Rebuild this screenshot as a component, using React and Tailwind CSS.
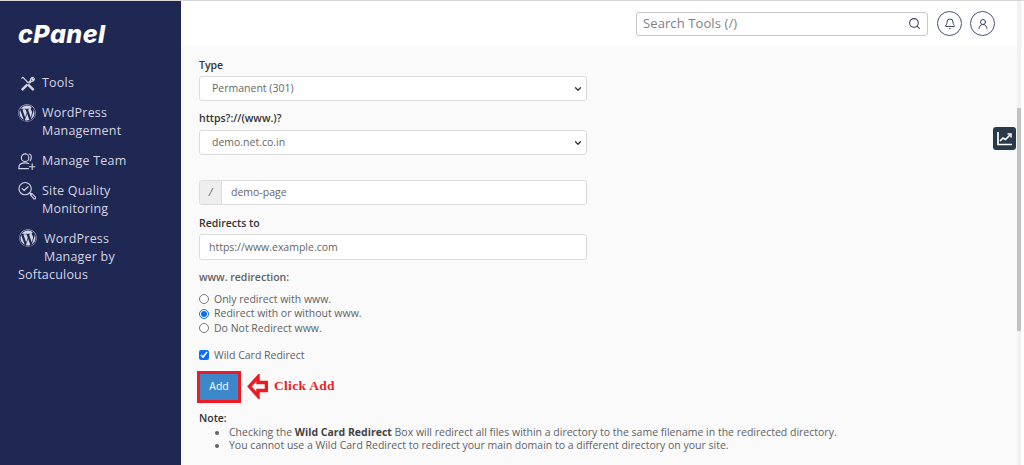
import { Bell, ChevronDown, Search, UserRound } from 'lucide-react'
import { FaWordpress } from 'react-icons/fa'

function ToolsIcon() {
  return (
    <svg width="15" height="15" viewBox="0 0 17 17" fill="none" stroke="currentColor" strokeWidth="1.4" strokeLinecap="round" strokeLinejoin="round">
      <path d="M2 2.500 3.500 1.500 9 7.500" />
      <path d="M7.500 9.500 2 15l1 1 5.500-5.500" />
      <path d="M9.500 7.500 12 5c-.5-1.800.8-3.500 3-3.500l-1.500 1.800 1 1 1.800-1.200c0 2-1.800 3.400-3.500 2.900L11 8" />
      <path d="M10 9.500 15.500 15 14.500 16 9 10.500" />
    </svg>
  )
}

function TeamIcon() {
  return (
    <svg width="19" height="19" viewBox="0 0 19 19" fill="none" stroke="currentColor" strokeWidth="1.2" strokeLinecap="round">
      <circle cx="7.500" cy="5.500" r="4" />
      <path d="M12 1.600c2.400.6 2.900 4.600.8 7" />
      <path d="M1 17v-1.500C1 12.500 3.500 11 7.500 11c1.500 0 2.800.2 3.800.7" />
      <path d="M1 17h10" />
      <path d="M15 12v6M12 15h6" />
    </svg>
  )
}

function QualityIcon() {
  return (
    <svg width="19" height="20" viewBox="0 0 19 20" fill="none" stroke="currentColor" strokeWidth="1.2" strokeLinecap="round" strokeLinejoin="round">
      <circle cx="7.500" cy="7.500" r="6.500" />
      <path d="m4.500 7.500 2 2 4-4" />
      <path d="m12.500 12 1.500 1.500" />
      <path d="m13 14 1.500-1.500 3.700 3.700c.6.6.6 1.300.1 1.800s-1.200.5-1.800-.1z" />
    </svg>
  )
}

function SideItem({ icon, children }) {
  return (
    <div className="flex gap-[6px] mb-[12px]">
      <span className="w-[18px] h-[18px] shrink-0 flex items-center justify-center">{icon}</span>
      <span className="leading-[18px]">{children}</span>
    </div>
  )
}

function Sidebar() {
  return (
    <aside className="w-[181px] shrink-0 bg-[#1f2753] text-[#d3d6e4] text-[12.500px] tracking-[0.2px] pl-[18px] pr-2">
      <div className="h-[47px] pt-[20px] text-white text-[25px] leading-[26px] font-extrabold italic font-['Inter',sans-serif] tracking-[0.5px]">
        cPanel
      </div>
      <div className="pt-[26px]">
        <SideItem icon={<ToolsIcon />}>Tools</SideItem>
        <SideItem icon={<FaWordpress size={18} />}>WordPress<br />Management</SideItem>
        <SideItem icon={<TeamIcon />}>Manage Team</SideItem>
        <SideItem icon={<QualityIcon />}>Site Quality<br />Monitoring</SideItem>
        <div className="leading-[18px] mt-[-1px]">
          <FaWordpress size={18} className="inline-block align-[-4px] mr-[7px] ml-[1px]" />
          WordPress
          <br />
          <span className="pl-[26px]">Manager by</span>
          <br />
          Softaculous
        </div>
      </div>
    </aside>
  )
}

function Header() {
  return (
    <header className="h-[45px] bg-white shadow-[0_1px_3px_rgba(0,0,0,0.08)] flex items-center justify-end pr-[26px] gap-[9px] shrink-0">
      <div className="w-[292px] h-[24px] rounded-[3px] border border-[#c5c5d3] flex items-center justify-between pl-[6px] pr-[6px] text-[13px] text-[#7d7f88]">
        <span className="tracking-[0.1px]">Search Tools (/)</span>
        <Search size={13} className="text-[#3c4463]" strokeWidth={2} />
      </div>
      <div className="flex gap-[8px]">
        <span className="w-[25px] h-[25px] rounded-full border border-[#4b5079] flex items-center justify-center text-[#3c4463]">
          <Bell size={12} />
        </span>
        <span className="w-[25px] h-[25px] rounded-full border border-[#4b5079] flex items-center justify-center text-[#3c4463]">
          <UserRound size={12} />
        </span>
      </div>
    </header>
  )
}

function SelectField({ value }) {
  return (
    <div className="relative h-[25px]">
      <select
        defaultValue={value}
        className="appearance-none w-full h-full bg-white border border-[#dcdcdc] rounded-[3px] pl-[12px] pt-[1px] text-[#666666] text-[10.500px] outline-none"
      >
        <option>{value}</option>
      </select>
      <ChevronDown size={10} strokeWidth={3} className="absolute right-[4px] top-[8px] text-[#333] pointer-events-none" />
    </div>
  )
}

function Radio({ label, checked }) {
  return (
    <label className="flex items-center gap-[5px] h-[14.500px]">
      <input type="radio" name="www" defaultChecked={checked} className="w-[10px] h-[10px] m-0 accent-[#0d6efd]" />
      {label}
    </label>
  )
}

function Form() {
  return (
    <div className="flex-1 bg-[#fafafa] pl-[18px] text-[10.500px] text-[#5f6266] overflow-hidden">
      <div className="w-[388px]">
        <label className="block font-semibold text-[#333] leading-[16px] mt-[11px] mb-[3px]">Type</label>
        <SelectField value="Permanent (301)" />
        <label className="block font-semibold text-[#333] leading-[16px] mt-[9px] mb-[4px]">https?://(www.)?</label>
        <SelectField value="demo.net.co.in" />
        <div className="flex h-[25px] mt-[25px] border border-[#dcdcdc] rounded-[3px] bg-white overflow-hidden">
          <span className="w-[22px] bg-[#eeeeee] border-r border-[#dcdcdc] flex items-center justify-center italic">/</span>
          <input readOnly value="demo-page" className="flex-1 pl-[9px] pt-[1px] text-[#666666] outline-none" />
        </div>
        <label className="block font-semibold text-[#333] leading-[16px] mt-[10px] mb-[3px]">Redirects to</label>
        <input readOnly value="https://www.example.com" className="block w-full h-[26px] bg-white border border-[#dcdcdc] rounded-[3px] pl-[9px] text-[#666666] outline-none" />
      </div>

      <p className="font-semibold leading-[16px] mt-[9px] mb-[7px]">www. redirection:</p>
      <div className="leading-[15px]">
        <Radio label="Only redirect with www." />
        <Radio label="Redirect with or without www." checked />
        <Radio label="Do Not Redirect www." />
      </div>
      <label className="flex items-center gap-[5px] leading-[15px] mt-[12px]">
        <input type="checkbox" defaultChecked className="w-[10px] h-[10px] m-0 accent-[#0d6efd]" />
        Wild Card Redirect
      </label>

      <div className="flex items-center mt-[8px] ml-[-2px]">
        <button className="w-[44px] h-[32px] border-[3px] border-[#ed1c24] bg-[#3b87c9] text-white text-[10.500px]">Add</button>
        <svg width="21" height="25" viewBox="0 0 21 25" className="ml-[6px]" fill="none" stroke="#ed1c24" strokeWidth="3.500">
          <path d="M2.500 12.500 11 3v5.500h8.500v8H11V22z" />
        </svg>
        <span className="ml-[6px] text-[#ed1c24] font-bold text-[13.500px] font-['Liberation_Serif',serif] tracking-[0.3px]">Click Add</span>
      </div>

      <p className="font-semibold text-[#333] leading-[14px] mt-[8px] mb-[1px]">Note:</p>
      <ul className="list-disc pl-[30px] leading-[13.500px]">
        <li>Checking the <b className="font-bold text-[#444]">Wild Card Redirect</b> Box will redirect all files within a directory to the same filename in the redirected directory.</li>
        <li>You cannot use a Wild Card Redirect to redirect your main domain to a different directory on your site.</li>
      </ul>
    </div>
  )
}

export default function App() {
  return (
    <div className="w-[1024px] h-[465px] overflow-hidden bg-white font-['Open_Sans',sans-serif]">
      <div className="h-[1px] bg-[#d8d8d8]" />
      <div className="relative w-[1021px] h-[464px] flex">
        <Sidebar />
        <main className="flex-1 flex flex-col min-w-0">
          <Header />
          <Form />
        </main>
        {/* scrollbar */}
        <div className="absolute right-0 top-0 bottom-0 w-[4px] bg-[#f1f1f1]">
          <div className="absolute left-0 top-[107px] w-full h-[223px] bg-[#c1c1c1]" />
        </div>
        <div className="absolute right-[5px] top-[126px] w-[23px] h-[23px] rounded-[3px] bg-[#293a4a] flex items-center justify-center">
          <svg width="15" height="14" viewBox="0 0 15 14" fill="none" stroke="white" strokeWidth="1.700">
            <path d="M1 0v12.500h14" />
            <path d="m3 9 3-3 2.500 1.500L13 3" />
            <path d="M10.500 2H14v3.500" strokeWidth="1.500" />
          </svg>
        </div>
      </div>
    </div>
  )
}
